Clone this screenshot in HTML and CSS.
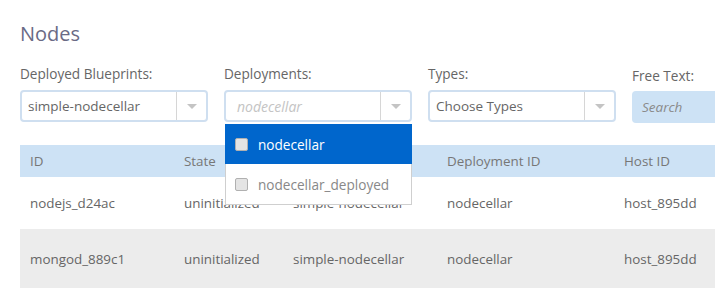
FILE: index.html
```html
<!DOCTYPE html>
<html lang="en">
<head>
  <meta charset="UTF-8">
  <title>Nodes</title>
  <link rel="stylesheet" href="styles.css">
</head>
<body>
  <div class="page">
    <h1>Nodes</h1>
    <div class="filters">
      <div class="filter">
        <label>Deployed Blueprints:</label>
        <div class="select">
          <span class="value">simple-nodecellar</span>
          <span class="arrow"></span>
        </div>
      </div>
      <div class="filter open">
        <label>Deployments:</label>
        <div class="select">
          <span class="value placeholder">nodecellar</span>
          <span class="arrow"></span>
        </div>
        <ul class="menu">
          <li class="active"><span class="check"></span>nodecellar</li>
          <li><span class="check"></span>nodecellar_deployed</li>
        </ul>
      </div>
      <div class="filter">
        <label>Types:</label>
        <div class="select">
          <span class="value">Choose Types</span>
          <span class="arrow"></span>
        </div>
      </div>
      <div class="filter free">
        <label>Free Text:</label>
        <div class="search">Search</div>
      </div>
    </div>

    <table class="nodes">
      <thead>
        <tr>
          <th class="c-id">ID</th>
          <th class="c-state">State</th>
          <th class="c-bp">Blueprint ID</th>
          <th class="c-dep">Deployment ID</th>
          <th>Host ID</th>
        </tr>
      </thead>
      <tbody>
        <tr>
          <td>nodejs_d24ac</td>
          <td>uninitialized</td>
          <td>simple-nodecellar</td>
          <td>nodecellar</td>
          <td>host_895dd</td>
        </tr>
        <tr class="alt">
          <td>mongod_889c1</td>
          <td>uninitialized</td>
          <td>simple-nodecellar</td>
          <td>nodecellar</td>
          <td>host_895dd</td>
        </tr>
      </tbody>
    </table>
  </div>
</body>
</html>
```

FILE: styles.css
```css
body {
  margin: 0;
  font-family: "Open Sans", "Noto Sans", sans-serif;
  color: #666;
  background: #fff;
  overflow: hidden;
}

.page {
  width: 820px;
  padding: 20px 0 0 20px;
}

h1 {
  margin: 0;
  font-size: 20px;
  font-weight: 400;
  line-height: 28px;
  color: #6a6a85;
}

.filters {
  display: flex;
  margin-top: 16px;
}

.filter {
  width: 188px;
  margin-right: 16px;
  position: relative;
}

.filter label {
  display: block;
  font-size: 13.6px;
  line-height: 20px;
  margin-bottom: 6px;
}

.free label {
  margin-top: 2px;
  margin-bottom: 5px;
}

.select {
  height: 28px;
  border: 2px solid #cfdff0;
  border-radius: 4px;
  display: flex;
  align-items: center;
}

.value {
  flex: 1;
  padding-left: 6px;
  font-size: 13.5px;
  color: #666;
}

.placeholder {
  padding-left: 11px;
  font-size: 14px;
  font-style: italic;
  color: #c4c4c4;
}

.arrow {
  width: 29px;
  height: 28px;
  border-left: 1px solid #d6d6d6;
  position: relative;
}

.arrow::after {
  content: "";
  position: absolute;
  left: 10px;
  top: 12px;
  border-left: 5px solid transparent;
  border-right: 5px solid transparent;
  border-top: 5px solid #c4c4c4;
}

.search {
  width: 110px;
  height: 32px;
  line-height: 32px;
  padding-left: 10px;
  background: #cde2f5;
  border-radius: 4px;
  font-size: 13.5px;
  font-style: italic;
  color: #8a8a8a;
}

.menu {
  position: absolute;
  left: 1px;
  top: 60px;
  width: 185px;
  margin: 0;
  padding: 0;
  list-style: none;
  background: #fff;
  border: 1px solid #cfcfcf;
  border-top: none;
  z-index: 2;
}

.menu li {
  height: 40px;
  display: flex;
  align-items: center;
  padding-left: 9px;
  font-size: 13.6px;
  color: #888;
}

.menu li.active {
  background: #0066cc;
  color: #fff;
  margin: 0 -1px;
  padding-left: 10px;
}

.check {
  width: 11px;
  height: 11px;
  border: 1px solid #b0b0b0;
  border-radius: 2px;
  background: #e4e4e4;
  margin-right: 10px;
}

.nodes {
  margin-top: 22px;
  width: 800px;
  border-collapse: collapse;
  font-size: 13.4px;
}

.nodes th {
  background: #cde2f5;
  font-weight: 400;
  text-align: left;
  height: 32px;
  padding: 0 10px;
  color: #777;
}

.nodes td {
  height: 52px;
  padding: 0 10px;
  color: #666;
}

.nodes tr.alt td {
  background: #ececec;
  height: 60px;
}

.c-id { width: 134px; }
.c-state { width: 89px; }
.c-bp { width: 134px; }
.c-dep { width: 157px; }
```
